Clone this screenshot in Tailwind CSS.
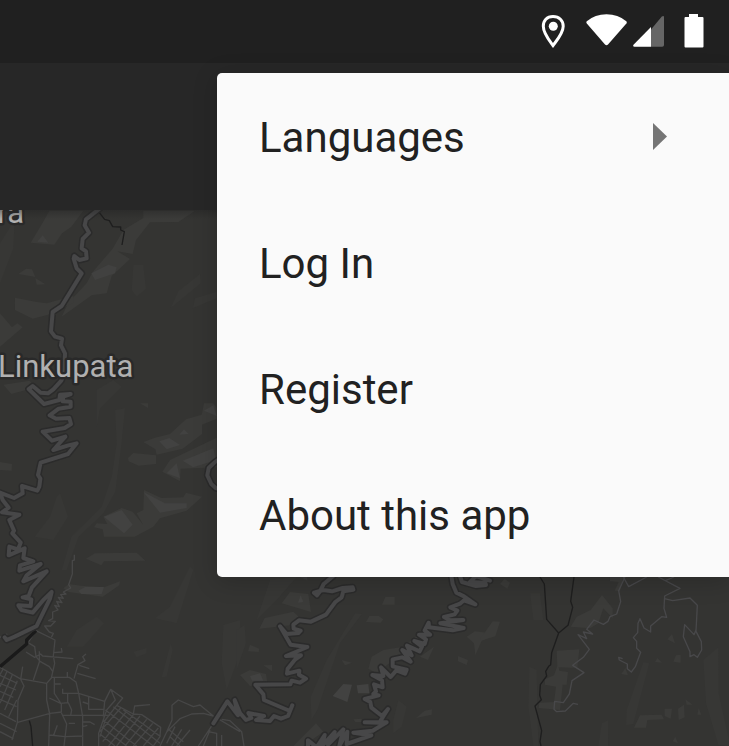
<!DOCTYPE html>
<html lang="en">
<head>
<meta charset="utf-8">
<meta name="viewport" content="width=device-width, initial-scale=1">
<title>Map</title>
<script src="https://cdn.jsdelivr.net/npm/@tailwindcss/browser@4"></script>
</head>
<body class="bg-[#343432] font-[Roboto,sans-serif]">
<div class="relative flex min-h-screen flex-col overflow-hidden">
  <header class="flex h-[63px] shrink-0 items-center justify-end bg-[#202020] pr-[25px] pb-0.5 text-white">
    <svg class="mr-[21px] h-9 w-6" viewBox="0 0 24 36" role="img" aria-label="Location">
      <path d="M12 3.500C5.800 3.500 2.300 7.700 2.300 13.200C2.300 20.200 8.300 27.500 12 32.500C15.700 27.500 22.200 20.200 22.200 13.200C22.200 7.700 18.200 3.500 12 3.500Z" fill="none" stroke="currentColor" stroke-width="3"/>
      <circle cx="12.300" cy="13.200" r="4.500" fill="currentColor"/>
    </svg>
    <svg class="mr-[6px] h-9 w-[41px]" viewBox="0 0 41 36" fill="currentColor" role="img" aria-label="Wi-Fi">
      <path d="M.8 8.200Q9 1.200 20.500 1.200T40.300 8.200Q41.200 9.300 40.400 10.500L22 31.500Q20.500 33 19 31.500L.8 10.500Q-.2 9.300.8 8.200Z"/>
    </svg>
    <svg class="mr-[19px] h-9 w-8" viewBox="0 0 32 36" fill="currentColor" role="img" aria-label="Mobile signal">
      <path d="M18 16.500L28.800 3.500Q31 2 31 4.200V32Q31 33.800 29.200 33.800H18Z" fill="#666"/>
      <path d="M18 14V33.800H1.500Q-.5 33.500.5 31.700Z"/>
    </svg>
    <svg class="h-9 w-5" viewBox="0 0 20 36" fill="currentColor" role="img" aria-label="Battery">
      <path d="M5 1H14V4H18.500Q19.500 4 19.500 5V33.500Q19.500 34.500 18.500 34.500H1.500Q.5 34.500.5 33.500V5Q.5 4 1.500 4H5Z"/>
    </svg>
  </header>

  <div class="h-[147px] shrink-0 bg-[#272727]"></div>

  <main class="relative flex-1">
    <svg class="h-[536px] min-h-full w-full" viewBox="0 210 729 536" preserveAspectRatio="xMinYMin slice" role="img" aria-label="Map around Linkupata">
      <defs>
        <linearGradient id="shade" x1="0" y1="0" x2="0" y2="1">
          <stop offset="0" stop-color="#202020" stop-opacity=".4"/><stop offset="1" stop-color="#202020" stop-opacity="0"/>
        </linearGradient>
        <g id="roads" fill="none" stroke-linejoin="round" stroke-linecap="round">
          <path transform="translate(0 190) scale(.33333)" d="M300 55L258 88L254 106L267 128L248 147L245 175L258 184L260 205L238 210L223 198L221 206L230 235L245 250L185 348L158 366L153 424L165 440L186 446L183 466L195 490L193 548L184 572L160 598L144 610L122 608L98 588L86 597L132 642L178 630L180 614L212 612L190 620L188 634L212 635L212 650L176 656L149 676L168 686L208 684L213 702L194 714L128 725L156 752L196 740L160 780L205 766L230 760L204 792L122 818L114 855L121 866L118 890L112 902L66 888L68 910L42 924L0 908L8 930L26 953L6 967L58 974L28 990L42 1022L37 1030L62 1058L54 1078L28 1070L26 1096L74 1075L70 1104L100 1114L60 1126L58 1142L122 1122L80 1156L70 1174L140 1144L96 1192L86 1218L68 1222L94 1228L92 1248L55 1246L64 1260L98 1268L132 1228L155 1206L150 1226L110 1308L44 1340L20 1350L14 1342"/>
          <path transform="translate(0 380) scale(.33333)" d="M670 228L645 246L626 264L622 286L634 312L648 325L675 328"/>
          <path transform="translate(230 560) scale(.33333)" d="M310 48L281 72L270 94L261 106L252 98L280 90L306 94L338 84L368 82L370 89L340 94L335 112L316 126L288 164L243 185L207 181L190 194L191 206L212 212L205 219L170 222L150 199L182 254L232 261L204 273L168 288L213 286L196 298L173 326L171 341L208 332L207 344L228 356L210 368L185 362L181 373L76 374L100 403L102 420L180 453L187 436L174 468L153 476L132 468L120 483L78 480L102 468L55 459L64 474L48 480L30 459L14 420L24 466L-8 424L-50 490"/>
          <path transform="translate(230 560) scale(.33333)" d="M664 48L668 72L679 98L702 109L736 133L702 121L690 131L661 142L682 152L674 163L642 171L660 181L700 180L631 190L672 198L701 204L668 211L597 202L596 188L584 211L600 224L567 224L588 238L584 252L553 243L576 260L569 274L531 257L545 286L517 270L542 305L516 292L488 298L488 319L530 329L525 341L499 331L482 351L453 322L460 348L427 345L456 361L458 382L432 373L438 394L430 402L446 406L404 417L421 426L424 443L456 468L474 447L448 488L404 487L470 487L428 512L370 518L424 526L350 552L352 515L328 558L340 508L294 554L314 516L276 558L284 525L260 562L234 541L234 570"/>
          <path transform="translate(230 560) scale(.33333)" d="M690 48L696 66L738 78L768 75L766 68L720 66L738 48L780 62"/>
        </g>
      </defs>
      <rect y="210" width="729" height="536" fill="#343432"/>

      <!-- terrain -->
      <g fill="#3b3b39">
        <g transform="translate(0 190) scale(.33333)">
          <path d="M148 62H250L214 110L186 130L163 164L92 158L128 98Z"/>
          <path d="M430 62H585L535 96L450 97L408 150L398 192L352 184L390 207L335 258L320 310L275 316L185 380L205 338L260 280L278 246L338 176L370 120L430 84Z"/>
          <path d="M55 252L78 236L96 238L106 261ZM106 264L136 283L110 284ZM45 323L110 336L140 340L220 318V338L144 374L98 386L45 360ZM0 370L36 412L52 400L68 412L0 470Z"/>
          <path d="M600 252L602 280L512 354L535 304ZM578 355L585 325L650 305V325ZM400 225L430 225L438 296L410 320L395 300Z" fill="#373735"/>
          <path d="M0 160L44 90L40 175L0 280Z" fill="#373735"/>
          <path d="M274 250L325 224L350 232L345 250L285 270ZM112 155L128 136L145 158Z" fill="#414140"/>
        </g>
        <g transform="translate(0 380) scale(.33333)">
          <path d="M10 14L88 2L108 22L34 42ZM0 246L36 252L35 272L0 270ZM420 70H444V84ZM430 186L465 173L510 162L558 118L605 104L612 70L640 70L650 85V116L606 134V162L548 206L470 224L466 208ZM384 234L400 219L468 226V252L416 257L386 244ZM487 275L510 240L650 173V262L542 266L540 304Z"/>
          <path d="M310 410L365 384L398 395L430 435L410 400L430 390L432 330L484 354L550 352L558 338L606 350L612 345L560 392L480 415L460 440L404 470H312L308 448L282 442L290 430L322 432Z"/>
          <path d="M258 536L285 520L410 518L436 542L312 544L304 556Z"/>
          <path d="M345 90L375 85L365 190L346 335L310 400L236 470L200 570H185L214 470L305 380L335 290L350 190ZM170 350L180 340L204 410L160 480L104 470L150 410ZM290 30L340 0L365 20L300 86L290 140Z" fill="#373735"/>
          <path d="M478 184L508 174L540 195L500 208ZM538 164L552 148L566 162ZM430 336L495 370L560 370V384L480 398ZM312 410L365 390L398 434L372 460ZM500 280L530 250L540 295ZM548 242L640 205L648 240L580 262ZM612 92L640 76L650 108Z" fill="#424241"/>
        </g>
        <g transform="translate(0 550) scale(.33333)">
          <path d="M190 115L206 102L244 107L312 112L360 94L358 106L308 140L206 126Z"/><path d="M235 122L255 111H312L305 132H244Z" fill="#424241"/>
          <path d="M570 50L580 60L530 220L465 205L510 170ZM512 280L518 300L500 380L485 382ZM670 225L720 210V310L680 420L665 340ZM230 240L290 200L312 220L250 290L200 290ZM400 305L440 294L440 310L410 322Z" fill="#373735"/>
        </g>
        <g transform="translate(230 560) scale(.33333)">
          <path d="M155 130L180 96L235 102L243 156ZM88 206L104 174L190 155L206 170L180 196L140 200ZM54 274L60 254L88 266L86 276ZM100 316L126 315V334ZM30 345L60 330L108 342L112 368L60 378ZM210 51H232V62ZM456 134L466 111H494V134ZM408 186L418 168H446L460 178L452 188ZM335 300L366 308L345 316ZM415 326L425 290L460 270L520 260L575 216L555 280L490 300L440 340ZM570 290L612 260L594 300ZM684 288L714 300L710 315L684 304ZM710 230L735 214L780 220V232L755 242L736 286L732 250ZM558 474L584 452L606 448L605 464ZM370 478L395 476L396 486H376ZM190 558L258 490L280 515L220 558Z"/>
          <path d="M308 408L340 372L366 374L352 426ZM380 376L415 372L418 400H384ZM60 348L90 340L100 362H66ZM204 128L212 106L220 126Z" fill="#424241"/>
          <path d="M375 160L396 162L330 250L262 450L244 480L242 410L290 300ZM20 210L44 195L48 250L20 330ZM120 60L200 51L140 120L80 180ZM490 480L505 420L530 440L515 500L490 520Z" fill="#373735"/>
        </g>
        <g transform="translate(480 560) scale(.33333)">
          <path d="M0 238L38 184L60 185L46 229L2 242ZM60 72L74 56L90 68L82 86ZM272 200L290 170L332 150L366 105L398 145V175L370 145L355 190L330 205ZM232 318L230 272L298 268L292 324L236 322L238 332L264 336L260 374H248L240 450L176 444L178 428L222 426L228 380L195 374V358L222 346ZM390 51H430L420 94L404 92L416 66L390 64ZM562 238L576 222L585 250ZM525 306L532 294L546 308ZM580 305L588 286L602 284V308ZM424 342L436 324L444 346ZM462 503L480 466L545 464L552 478L502 480L498 503ZM554 446L576 446L572 476L554 468ZM594 446L612 434L614 472L596 480ZM616 418L638 434L620 434ZM652 464L656 444L664 464ZM578 544L586 530L594 550Z"/>
          <path d="M490 306L508 310L460 492L438 496L440 450ZM670 300L715 262L716 400L747 540V558L715 555L678 430ZM150 100L180 100L190 180L160 180ZM148 320L170 330L175 558H160L145 440ZM365 490L385 480L384 558H355Z" fill="#373735"/>
        </g>
      </g>

      <!-- minor streets -->
      <g transform="translate(0 550) scale(.33333)" fill="none" stroke="#474747" stroke-width="4" stroke-linejoin="round">
        <path d="M223 14V30L217 32V72L206 104L212 114L190 126L198 132L182 134L190 145L175 142L186 158L170 154L178 170L164 166L174 180L158 186V206L146 212L166 214L152 228L134 228L148 246L160 250L154 262"/>
        <path d="M108 242L165 270L160 318L164 340L154 384L140 400V450L149 492L146 588M108 242L84 278L104 290L108 320L120 334L148 350L158 364M78 306L104 322L122 312L128 318L220 326M118 304V336L100 390M160 308L186 306L184 294M258 312L248 320L255 332L234 344L222 386M238 346L268 356M232 370L287 386M0 352L60 386L140 400M68 350L62 388L72 408L54 450L52 518L36 570M50 518L150 490L186 486M154 382H208L228 396L236 430L248 500V588M202 366V382M163 382V430L184 462V488L200 522L192 588M182 402H163M188 416V430H236L314 454L310 500M148 444L182 460L205 458L215 480L212 496M203 430V460M186 496H330M248 456L266 462V478H310M266 462V440M206 520H225M248 516H270L284 524M248 530L262 526M160 558L172 526M148 555L195 560L250 558"/>
        <path d="M0 376L52 400M0 400L48 420M0 424L40 442M0 448L50 470M0 490L48 515M0 520L50 545M0 545L40 566M22 362L0 410M38 372L0 460M52 392L14 480M50 450L26 500M10 356L0 374"/>
        <path d="M314 454L332 418L368 444L350 466L400 492L425 494L482 532L480 560L460 588M332 418L346 450L320 480L296 550V588M400 492L404 468L450 464M350 466L316 510L300 560M316 480L460 588M340 470L480 580M370 480L482 560M310 510L410 588M305 530L380 588M300 552L345 588M420 498L350 588M440 508L375 588M458 520L400 588M475 534L430 588M400 494L326 588M378 486L308 575M362 474L300 545"/>
        <path d="M500 546L516 510V466L535 450L580 470L600 465L640 498L720 545M500 546L540 506L575 492L610 490L640 498M500 546L480 588M508 540L550 575M525 530L500 580M545 538L515 588M570 540L530 588M510 560L540 588M640 520L595 588M625 545L650 550V588M0 262L22 252M630 540L610 588M665 555V588M665 508L690 512L725 545L732 588"/>
      </g>
      <g transform="translate(480 560) scale(.33333)" fill="none" stroke="#48484a" stroke-width="4" stroke-linejoin="round">
        <path d="M435 51L416 92L422 125L410 162L390 170L384 184L370 193L342 180L320 208L338 222L310 216L320 236L294 224L328 268L310 292L278 316L312 338L276 362L268 402L250 428L224 424L222 448L230 455L256 453L280 430L294 433"/>
        <path d="M430 51L446 80L500 51M535 51L600 85L554 108L552 145L560 172L545 170L512 198V216L492 204L480 176L474 190L473 218L460 233L470 244V265L482 277L466 320L454 336L442 326V312L418 300L416 292L428 296M556 62L582 51M554 116L578 122L630 114L652 136L648 214L664 245L665 270L652 292L642 284L630 290V275L610 230L614 194L642 224L648 210"/>
      </g>

      <!-- boundaries and rivers -->
      <g fill="none" stroke="#1e1e1e" stroke-width="4" stroke-linejoin="round">
        <path transform="translate(0 190) scale(.33333)" d="M292 60L314 88L328 92L338 110L362 111L362 120L373 125L366 165"/>
        <path transform="translate(480 560) scale(.33333)" d="M180 51L193 72L200 178L236 219L264 196L278 142L272 124L282 51M236 219L215 278L212 314L206 319L197 334L200 348L181 374L179 406L184 419L165 438L185 512L180 545L183 558"/>
        <path transform="translate(0 550) scale(.33333)" d="M88 512L93 530L98 588"/>
        <path transform="translate(0 550) scale(.33333)" d="M108 242L80 270V282L0 350" stroke="#1a1a1a" stroke-width="10"/>
      </g>

      <use href="#roads" stroke="#2b2b2b" stroke-width="21"/>
      <use href="#roads" stroke="#474748" stroke-width="12"/>

      <g fill="#b0b0b0" stroke="#292929" stroke-width="5" stroke-linejoin="round" paint-order="stroke" font-family="Roboto, sans-serif" font-size="31">
        <text x="-2" y="377">Linkupata</text>
        <text x="24" y="223" text-anchor="end">ra</text>
      </g>
      <rect y="210" width="729" height="9" fill="url(#shade)"/>
    </svg>
  </main>

  <nav aria-label="Options" class="absolute top-[73px] right-0 left-[217px] rounded-l-[5px] bg-[#fafafa] text-[42px] text-[#212121] shadow-[0_4px_24px_rgba(0,0,0,0.2)]">
    <button type="button" aria-haspopup="menu" class="flex h-[126px] w-full items-center justify-between pr-[62px] pl-[42px] text-left">
      <span class="pt-0.5">Languages</span>
      <svg class="h-[27px] w-[14px]" viewBox="0 0 14 27" aria-hidden="true"><path d="M0 0L14 13.500L0 27Z" fill="#757575"/></svg>
    </button>
    <button type="button" class="flex h-[126px] w-full items-center px-[42px] text-left"><span class="pt-0.5">Log In</span></button>
    <button type="button" class="flex h-[126px] w-full items-center px-[42px] text-left"><span class="pt-0.5">Register</span></button>
    <button type="button" class="flex h-[126px] w-full items-center px-[42px] text-left"><span class="pt-0.5">About this app</span></button>
  </nav>
</div>
</body>
</html>
